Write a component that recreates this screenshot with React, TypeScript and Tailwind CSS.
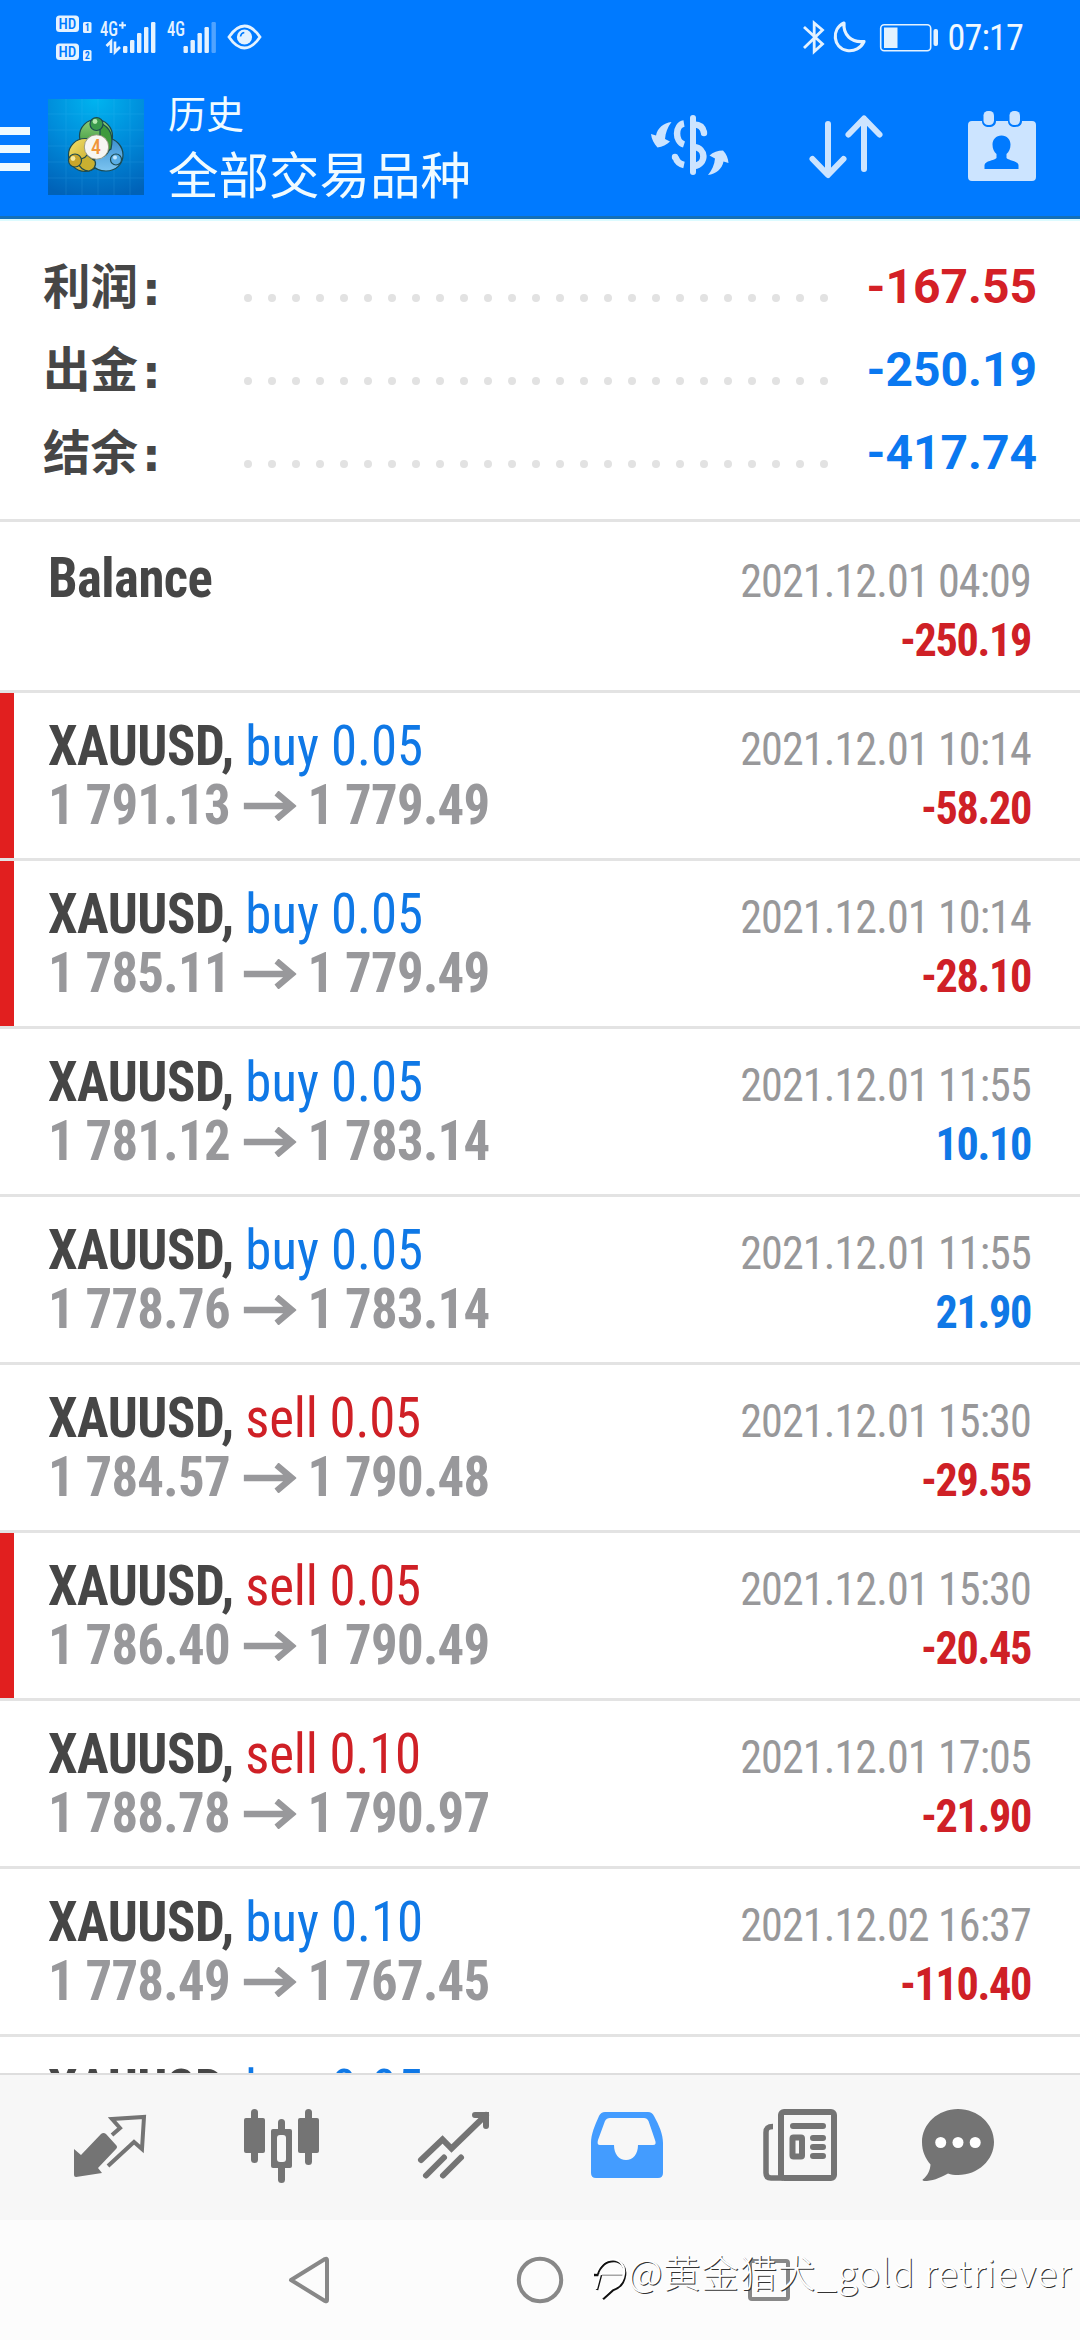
import clsx from "clsx";

type Deal = {
    side: "buy" | "sell";
    volume: string;
    open: string;
    close: string;
    time: string;
    profit: string;
    marked?: boolean;
};

const summary = [
    { label: "利润", value: "-167.55", negative: true },
    { label: "出金", value: "-250.19" },
    { label: "结余", value: "-417.74" },
];

const deals: Deal[] = [
    { side: "buy", volume: "0.05", open: "1 791.13", close: "1 779.49", time: "2021.12.01 10:14", profit: "-58.20", marked: true },
    { side: "buy", volume: "0.05", open: "1 785.11", close: "1 779.49", time: "2021.12.01 10:14", profit: "-28.10", marked: true },
    { side: "buy", volume: "0.05", open: "1 781.12", close: "1 783.14", time: "2021.12.01 11:55", profit: "10.10" },
    { side: "buy", volume: "0.05", open: "1 778.76", close: "1 783.14", time: "2021.12.01 11:55", profit: "21.90" },
    { side: "sell", volume: "0.05", open: "1 784.57", close: "1 790.48", time: "2021.12.01 15:30", profit: "-29.55" },
    { side: "sell", volume: "0.05", open: "1 786.40", close: "1 790.49", time: "2021.12.01 15:30", profit: "-20.45", marked: true },
    { side: "sell", volume: "0.10", open: "1 788.78", close: "1 790.97", time: "2021.12.01 17:05", profit: "-21.90" },
    { side: "buy", volume: "0.10", open: "1 778.49", close: "1 767.45", time: "2021.12.02 16:37", profit: "-110.40" },
];

function Signal({ x, weak }: { x: number; weak?: boolean }) {
    return (
        <g>
            {[46, 40, 33, 27, 22].map((top, i) => (
                <rect key={top} x={x + i * 7} y={top} width="4.4" height={53 - top} rx="1.2" opacity={weak && i === 4 ? 0.35 : 1} />
            ))}
        </g>
    );
}

function StatusBar() {
    return (
        <div className="flex h-[76px] items-start pl-14 pr-[57px] text-[#e4f2ff]">
            <svg className="h-[76px] w-9" viewBox="56 0 36 76" fill="currentColor">
                <rect x="56" y="15.500" width="23" height="16.500" rx="3.500" />
                <rect x="56" y="43.500" width="23" height="16.500" rx="3.500" />
                <g fill="#007aff" fontFamily="Roboto" fontWeight="500" fontSize="15" textAnchor="middle">
                    <text x="67.500" y="29.200">HD</text>
                    <text x="67.500" y="57.200">HD</text>
                </g>
                <rect x="83" y="22" width="8.500" height="11" rx="1.500" />
                <rect x="83" y="50" width="8.500" height="11" rx="1.500" />
                <g fill="#007aff" fontFamily="Roboto" fontWeight="700" fontSize="10" textAnchor="middle">
                    <text x="87.200" y="31.200">1</text>
                    <text x="87.200" y="59.200">2</text>
                </g>
            </svg>
            <svg className="ml-2 h-[76px] w-14" viewBox="100 0 56 76" fill="currentColor">
                <text x="100" y="36" fontFamily="Roboto Condensed, Roboto" fontWeight="500" fontSize="20" textLength="18" lengthAdjust="spacingAndGlyphs">4G</text>
                <path d="M119 25.200h7M122.500 21.700v7" stroke="currentColor" strokeWidth="2" />
                <path d="M106.500 46l4.500-4.500V53M115 41.500V52l5-5" fill="none" stroke="currentColor" strokeWidth="2.600" />
                <Signal x={123} />
            </svg>
            <svg className="ml-[11px] h-[76px] w-[51px]" viewBox="167 0 51 76" fill="currentColor">
                <text x="167" y="36" fontFamily="Roboto Condensed, Roboto" fontWeight="500" fontSize="20" textLength="18" lengthAdjust="spacingAndGlyphs">4G</text>
                <Signal x={183.500} weak />
            </svg>
            <svg className="ml-2 h-[76px] w-9" viewBox="226 0 36 76" fill="none" stroke="currentColor">
                <path d="M229 37c4-6 9.500-11 15.500-11S256 31 260 37c-4 6-9.500 11-15.500 11S233 43 229 37z" strokeWidth="2.800" />
                <circle cx="244.500" cy="37" r="7.600" fill="currentColor" stroke="none" />
                <path d="M240.500 36.500c.3-2 1.700-3.600 3.800-4" stroke="#007aff" strokeWidth="1.600" />
            </svg>

            <div className="grow" />

            <svg className="h-[76px] w-6" viewBox="803 0 24 76" fill="none" stroke="currentColor" strokeWidth="2.800">
                <path d="M805 27l18.500 17-8.300 7.500V23l8.300 7L805 48" />
            </svg>
            <svg className="ml-1.5 h-[76px] w-9" viewBox="833 0 36 76" fill="none" stroke="currentColor" strokeWidth="3.200" strokeLinejoin="round">
                <path d="M845 23c-13 6-11 25 3 27.500 7.500 1.200 14-2.500 17-9-13 1.500-21-7-20-18.500z" />
            </svg>
            <svg className="ml-2.5 h-[76px] w-[62px]" viewBox="879 0 62 76" fill="currentColor">
                <rect x="881.700" y="24.700" width="50" height="26" rx="3.500" fill="none" stroke="currentColor" strokeWidth="1.600" />
                <rect x="885" y="27.500" width="13.500" height="20.500" />
                <rect x="934.500" y="29" width="4.500" height="17" rx="2" />
            </svg>
            <span className="ml-2 mt-[17px] font-['Roboto_Condensed','Roboto'] text-[36px] leading-[42px] tracking-[-0.8px] text-[#f0f8ff] [font-stretch:75%]">07:17</span>
        </div>
    );
}

function AppLogo() {
    return (
        <svg className="ml-[18px] mt-[23px] size-24" viewBox="0 0 96 96">
            <defs>
                <radialGradient id="sky" cx=".5" cy="0" r="1.050">
                    <stop offset="0" stopColor="#00b4f0" />
                    <stop offset=".55" stopColor="#0088d8" />
                    <stop offset="1" stopColor="#0062b8" />
                </radialGradient>
                <linearGradient id="green" x1="0" y1="0" x2="0" y2="1">
                    <stop offset="0" stopColor="#8fd07a" />
                    <stop offset="1" stopColor="#2a8a30" />
                </linearGradient>
                <linearGradient id="gold" x1="0" y1="0" x2="1" y2="1">
                    <stop offset="0" stopColor="#f3e26a" />
                    <stop offset="1" stopColor="#b8961a" />
                </linearGradient>
                <linearGradient id="azure" x1="0" y1="0" x2="0" y2="1">
                    <stop offset="0" stopColor="#3a8fd0" />
                    <stop offset="1" stopColor="#7cc4f0" />
                </linearGradient>
            </defs>
            <rect width="96" height="96" fill="url(#sky)" />
            <path d="M18 0v96M34 0v96M50 0v96M66 0v96M82 0v96M0 15h96M0 31h96M0 47h96M0 63h96M0 79h96" stroke="#5cc8ff" strokeWidth="1" opacity=".14" />
            <g stroke="#1c4a50" strokeWidth="1.200">
                <circle cx="48" cy="37" r="16.500" fill="url(#green)" />
                <circle cx="37" cy="56" r="16.500" fill="url(#gold)" />
                <path d="M60 39c8 1 15 8 15 17 0 9-7 16-17 16-6 0-12-3-16-7l8-8c6 2 10-2 12-8z" fill="url(#azure)" />
                <path d="M52 24c10 4 14 12 11 26l-5 3-6-12z" fill="#3f9a3c" />
                <path d="M29 62c4-3 8-2 10-6l8 6c2 5-2 9-6 10-5 0-9-2-12-10z" fill="#c9b030" />
                <circle cx="48.500" cy="25" r="6.500" fill="#3a9a4c" />
                <circle cx="27" cy="61.500" r="6.500" fill="#c8a52c" />
                <circle cx="68" cy="60.500" r="5.500" fill="#5aaee6" />
            </g>
            <circle cx="47" cy="22.500" r="2.400" fill="#b4e8b0" />
            <circle cx="25" cy="59.500" r="2.400" fill="#f4e9a0" />
            <circle cx="67" cy="58.500" r="2" fill="#c4e8ff" />
            <circle cx="48.500" cy="48" r="12.200" fill="#f7f6f2" stroke="#8a8a70" strokeWidth=".8" />
            <text x="48" y="55" textAnchor="middle" fontFamily="Roboto" fontWeight="500" fontSize="20" fill="#f0953a">4</text>
        </svg>
    );
}

function Toolbar() {
    return (
        <div className="flex h-[140px] items-start">
            <svg className="h-[140px] w-[30px]" viewBox="0 76 30 140" fill="#ecfaff">
                <rect y="127" width="30" height="8" />
                <rect y="145" width="30" height="8" />
                <rect y="163" width="30" height="8" />
            </svg>
            <AppLogo />
            <div className="ml-6 mt-[14px] font-['Roboto','Noto_Sans_CJK_SC',sans-serif] text-[#f0fbff]">
                <div className="text-[38px] leading-[51px]">历史</div>
                <div className="text-[50.500px] leading-[72px]">全部交易品种</div>
            </div>
            <div className="grow" />
            <svg className="h-[140px] w-20" viewBox="650 76 80 140" fill="#cce4ff">
                <rect x="690" y="115" width="6" height="60" rx="3" />
                <path d="M684 123.500c-9 1.500-9.500 18 0 21M675.500 157c1 4 4 7 8.500 8" fill="none" stroke="#cce4ff" strokeWidth="6.500" />
                <circle cx="675" cy="157" r="3.200" />
                <path d="M694 124.500c5 0 9 2.500 10 8M694 147c12 1 13 17 0 19" fill="none" stroke="#cce4ff" strokeWidth="6.500" />
                <circle cx="704" cy="133" r="3.200" />
                <path d="M671.500 122c-8 1-14 6-15.500 13.500l-5-1.500c.5 5 3 9.500 6.500 13.500 5-1 9-2.500 12.500-6l-5-2.500c.5-6 2.500-12 6.500-17z" />
                <path d="M708 175c8-1 14-6 15.500-13.500l5 1.500c-.5-5-2-9-5.500-12.500-5 0-10 1.500-13.500 5l5.500 3c-.5 6-3 11.500-7 16.500z" />
            </svg>
            <svg className="ml-[76px] h-[140px] w-20" viewBox="806 76 80 140" fill="none" stroke="#cce4ff" strokeWidth="6" strokeLinecap="round" strokeLinejoin="round">
                <path d="M828 124v50M812.500 159L828 175l15.500-16M864 169v-50M848.500 134.500L864 118.500l15.500 16" />
            </svg>
            <svg className="ml-20 mr-[42px] h-[140px] w-[72px]" viewBox="966 76 72 140" fill="#cce4ff">
                <path d="M972 121h10c0 4 3 6 7 6s7-2 7-6h12c0 4 3 6 7 6s7-2 7-6h10q4 0 4 4v52q0 4-4 4h-60q-4 0-4-4v-52q0-4 4-4z" />
                <rect x="983.500" y="111" width="10.500" height="14" rx="4.500" />
                <rect x="1009.500" y="111" width="10.500" height="14" rx="4.500" />
                <path d="M1001.500 135.500c5.500 0 9 4 9 9 0 4-1.500 7.500-4 9.500v4c3 3 11 2.500 12 7v4h-34v-4c1-4.500 9-4 12-7v-4c-2.500-2-4-5.500-4-9.500 0-5 3.500-9 9-9z" fill="#007aff" />
            </svg>
        </div>
    );
}

function TimeAndProfit({ time, profit }: { time: string; profit: string }) {
    return (
        <div className="ml-auto origin-right scale-x-[0.96] pr-[1px] pt-[27px] text-right text-[46px] leading-[59px]">
            <div className="tracking-[-0.95px] text-[#98989a]">{time}</div>
            <div className={clsx("font-bold tracking-[-1.4px]", profit.startsWith("-") ? "text-[#cf2026]" : "text-[#0f78e6]")}>{profit}</div>
        </div>
    );
}

function DealRow({ deal }: { deal: Deal }) {
    return (
        <div className="flex h-[168px] shrink-0 border-b-[3px] border-[#e3e3e3] pr-12">
            <div className={clsx("mr-[34px] w-3.5 shrink-0", deal.marked && "bg-[#e11f1f]")} />
            <div className="origin-left scale-x-[0.96] pt-6 text-[55px] leading-[59px] whitespace-nowrap">
                <div>
                    <span className="font-bold tracking-[-0.5px] text-[#464646]">XAUUSD, </span>
                    <span className={deal.side === "buy" ? "text-[#0f78e6]" : "tracking-[-0.2px] text-[#cf2026]"}>
                        {deal.side} {deal.volume}
                    </span>
                </div>
                <div className="flex items-center font-bold tracking-[-0.75px] text-[#98989b]">
                    <span>{deal.open}</span>
                    <svg className="mx-3.5 mr-[11px] h-[30px] w-14" viewBox="0 0 56 30" fill="none" stroke="currentColor" strokeWidth="6.500">
                        <path d="M1 15h50M35 2l16 13-16 13" />
                    </svg>
                    <span>{deal.close}</span>
                </div>
            </div>
            <TimeAndProfit time={deal.time} profit={deal.profit} />
        </div>
    );
}

function TabBar() {
    return (
        <div className="flex h-[147px] shrink-0 items-center border-t-2 border-[#dedede] bg-[#f7f7f7] pb-px text-[#747474]">
            {/* Quotes */}
            <svg className="ml-[70px] size-20" viewBox="70 2107 80 80" fill="currentColor">
                <path d="M74 2149l7 6 20-21q2.500-2 5 0l10 11q2 2 0 4l-18 19 4 5-26 4q-2 0-2-2z" />
                <path d="M112 2135l8-7-8-9 32-2-2 32-8-7-26 24" fill="none" stroke="currentColor" strokeWidth="4" />
            </svg>
            {/* Chart */}
            <svg className="ml-[91px] size-20" viewBox="241 2107 80 80" fill="currentColor">
                <rect x="251" y="2109" width="7" height="54" rx="3.500" />
                <rect x="244" y="2118" width="21" height="35" rx="2" />
                <rect x="305" y="2109" width="7" height="56" rx="3.500" />
                <rect x="298" y="2118" width="21" height="35" rx="2" />
                <rect x="278" y="2119" width="7" height="64" rx="3.500" />
                <rect x="271" y="2129" width="21" height="39" rx="2" />
                <rect x="277" y="2135" width="9" height="27" rx="3" fill="#f7f7f7" />
            </svg>
            {/* Trade */}
            <svg className="ml-[93px] size-20" viewBox="414 2107 80 80" fill="none" stroke="currentColor" strokeWidth="6" strokeLinecap="round">
                <path d="M421 2160l21.500-20.500 9 9L486 2115M475 2115h11v11" />
                <path d="M426 2175.500l18-18M443 2175.500l18-18" />
            </svg>
            {/* History */}
            <svg className="ml-[93px] size-20" viewBox="587 2107 80 80">
                <path d="M605 2112h43q4 0 6 4c5 9 9 18 9 27v30q0 5-5 5h-62q-5 0-5-5v-30c0-9 4-18 8-27q2-4 6-4z" fill="#439cff" />
                <path d="M610 2118h34q3 0 4.500 3l6.500 19q2 5-2 5h-15c0 9-5 15-12 15s-12-6-12-15h-14q-3.500 0-2-5l7-19q1.500-3 5-3z" fill="#f7f7f7" />
            </svg>
            {/* News */}
            <svg className="ml-[93px] size-20" viewBox="760 2107 80 80" fill="none" stroke="currentColor" strokeWidth="6">
                <rect x="781" y="2112" width="53" height="66" rx="3" />
                <path d="M773 2126.500c-5 0-7 1.500-7 6V2173q0 5 5 5h12" strokeWidth="5.500" />
                <path d="M793 2126h30M813 2138h10M813 2147h10M813 2156h10" strokeLinecap="round" />
                <rect x="792.500" y="2137.500" width="9.500" height="19" rx="1" />
            </svg>
            {/* Mailbox */}
            <svg className="ml-[78px] size-20" viewBox="918 2107 80 80" fill="currentColor">
                <path d="M958 2109c20 0 36 15 36 33s-16 33-36 33c-4 0-7-.5-10-1.500-9 5-16 7.500-24 7.500q-3-1 0-2.500c4-4 6-8 6.500-14-5-6-8.500-13-8.500-22.500 0-18 16-33 36-33z" />
                <g fill="#fff">
                    <circle cx="940.700" cy="2142.500" r="5.500" />
                    <circle cx="958" cy="2142.500" r="5.500" />
                    <circle cx="975.200" cy="2142.500" r="5.500" />
                </g>
            </svg>
        </div>
    );
}

function NavBar() {
    return (
        <div className="relative flex h-[120px] shrink-0 items-center bg-[#fcfcfc]">
            <svg className="ml-[285px] size-12" viewBox="285 2256 48 48" fill="none" stroke="#888" strokeWidth="4" strokeLinejoin="round">
                <path d="M291 2280l34-21q2-1 2 1v40q0 2-2 1z" />
            </svg>
            <svg className="ml-[183px] size-12" viewBox="516 2256 48 48" fill="none" stroke="#888" strokeWidth="4">
                <circle cx="540" cy="2280" r="21.200" />
            </svg>
            <svg className="ml-[182px] size-12" viewBox="746 2256 48 48" fill="none" stroke="#888" strokeWidth="4">
                <rect x="750" y="2261" width="38" height="38" rx="2" />
            </svg>
            {/* author watermark lies over the system keys */}
            <div className="absolute right-[8px] top-[21px] flex items-center text-white [text-shadow:1px_1px_0_#333]">
                <svg className="mt-2.5 h-12 w-9" viewBox="592 2254 36 48" fill="none">
                    <path d="M597 2277c3-8 9-14 17-14 7 0 12 6 11 14s-6 13-12 15l-10 9M594 2277h6M597 2292l4-15" stroke="#111" strokeWidth="2.500" />
                    <path d="M602 2277h22" stroke="#888" strokeWidth="1.500" />
                    <path d="M596 2275.500c3-8 9-14 17-14 7 0 12 6 11 14s-6 13-12 15l-10 9M601 2275.500h22M596 2291l4-15" stroke="#fff" strokeWidth="2.200" />
                </svg>
                <span className="font-['Noto_Sans_CJK_SC',sans-serif] text-[37.500px] font-light leading-[60px] tracking-[0.7px] whitespace-nowrap">@黄金猎犬_gold retriever</span>
            </div>
        </div>
    );
}

export default function App() {
    return (
        <div className="flex h-[2340px] w-[1080px] flex-col overflow-hidden bg-white font-['Roboto_Condensed','Roboto',sans-serif] [font-stretch:75%]">
            <header className="h-[219px] shrink-0 border-b-[3px] border-[#1470b8] bg-[#007aff]">
                <StatusBar />
                <Toolbar />
            </header>

            <section className="flex h-[303px] shrink-0 flex-col border-b-[3px] border-t-2 border-b-[#e3e3e3] border-t-[#dcfbff] pl-[43px] pr-[43px] pt-[23px] font-['Roboto','Noto_Sans_CJK_SC',sans-serif] [font-stretch:100%]">
                {summary.map((row) => (
                    <div key={row.label} className="flex h-[83px] items-center">
                        <div className="mt-[5px] flex w-[201px] items-center text-[47.500px] font-bold leading-[83px] text-[#464646]">
                            {row.label}
                            <span className="ml-1 font-['DejaVu_Sans'] text-[47px]">:</span>
                        </div>
                        <div className="mt-[25px] flex w-[584px] justify-between">
                            {Array.from({ length: 25 }, (_, i) => (
                                <span key={i} className="size-2 rounded-full bg-[#e2e2e2]" />
                            ))}
                        </div>
                        <div className={clsx("ml-auto mt-px text-[48px] font-bold leading-[83px]", row.negative ? "text-[#d42026]" : "text-[#0a78f0]")}>{row.value}</div>
                    </div>
                ))}
            </section>

            <main className="flex h-[1551px] shrink-0 flex-col overflow-hidden">
                <div className="flex h-[171px] shrink-0 border-b-[3px] border-[#e3e3e3] px-12 pt-[3px]">
                    <div className="origin-left scale-x-[0.96] pt-6 text-[55px] font-bold leading-[59px] tracking-[-0.6px] text-[#464646]">Balance</div>
                    <TimeAndProfit time="2021.12.01 04:09" profit="-250.19" />
                </div>
                {deals.map((deal, i) => (
                    <DealRow key={i} deal={deal} />
                ))}
                <DealRow deal={{ ...deals[0], marked: false }} />
            </main>

            <TabBar />
            <NavBar />
        </div>
    );
}
